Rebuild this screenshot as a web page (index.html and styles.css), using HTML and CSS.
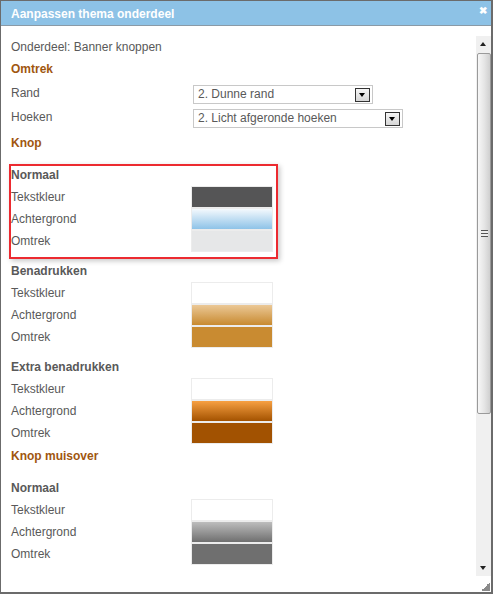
FILE: index.html
```html
<!DOCTYPE html>
<html lang="nl">
<head>
    <meta charset="UTF-8">
    <title>Aanpassen thema onderdeel</title>
    <link rel="stylesheet" href="styles.css">
</head>
<body>
    <div class="dialog">
        <div class="titlebar">
            <span class="title">Aanpassen thema onderdeel</span>
            <span class="close">&#10006;</span>
        </div>
        <div class="pane">
            <div class="content">
                <p class="intro">Onderdeel: Banner knoppen</p>

                <h2 class="section">Omtrek</h2>
                <div class="field">
                    <span class="label">Rand</span>
                    <div class="select select-short">2. Dunne rand<span class="drop"></span></div>
                </div>
                <div class="field">
                    <span class="label">Hoeken</span>
                    <div class="select select-long">2. Licht afgeronde hoeken<span class="drop"></span></div>
                </div>

                <h2 class="section section-knop">Knop</h2>
                <div class="group highlight">
                    <h3 class="group-title">Normaal</h3>
                    <div class="rows">
                        <div class="labels">
                            <span>Tekstkleur</span>
                            <span>Achtergrond</span>
                            <span>Omtrek</span>
                        </div>
                        <div class="swatches">
                            <span class="swatch" style="background:#555556"></span>
                            <span class="swatch" style="background:linear-gradient(#f4f9fd, #8ec3e8)"></span>
                            <span class="swatch" style="background:#e6e7e8"></span>
                        </div>
                    </div>
                </div>
                <div class="group">
                    <h3 class="group-title">Benadrukken</h3>
                    <div class="rows">
                        <div class="labels">
                            <span>Tekstkleur</span>
                            <span>Achtergrond</span>
                            <span>Omtrek</span>
                        </div>
                        <div class="swatches">
                            <span class="swatch" style="background:#ffffff"></span>
                            <span class="swatch" style="background:linear-gradient(#ebc896, #c88a30)"></span>
                            <span class="swatch" style="background:#c98b31"></span>
                        </div>
                    </div>
                </div>
                <div class="group">
                    <h3 class="group-title">Extra benadrukken</h3>
                    <div class="rows">
                        <div class="labels">
                            <span>Tekstkleur</span>
                            <span>Achtergrond</span>
                            <span>Omtrek</span>
                        </div>
                        <div class="swatches">
                            <span class="swatch" style="background:#ffffff"></span>
                            <span class="swatch" style="background:linear-gradient(#f7a042, #a35200)"></span>
                            <span class="swatch" style="background:#a25201"></span>
                        </div>
                    </div>
                </div>

                <h2 class="section section-hover">Knop muisover</h2>
                <div class="group group-first">
                    <h3 class="group-title">Normaal</h3>
                    <div class="rows">
                        <div class="labels">
                            <span>Tekstkleur</span>
                            <span>Achtergrond</span>
                            <span>Omtrek</span>
                        </div>
                        <div class="swatches">
                            <span class="swatch" style="background:#ffffff"></span>
                            <span class="swatch" style="background:linear-gradient(#bdbdbd, #6f6f6f)"></span>
                            <span class="swatch" style="background:#6f6f6f"></span>
                        </div>
                    </div>
                </div>
            </div>
            <div class="side">
                <div class="scrollbar">
                    <span class="sb-btn sb-up"></span>
                    <span class="sb-thumb"><span class="sb-grip"></span></span>
                    <span class="sb-track"></span>
                    <span class="sb-btn sb-down"></span>
                </div>
                <div class="resize"></div>
            </div>
        </div>
    </div>
</body>
</html>
```

FILE: styles.css
```css
/* dialoog */
body {
    margin: 0;
    font-family: "Liberation Sans", Arial, sans-serif;
    font-size: 12px;
    color: #595959;
    background: #fff;
}

.dialog {
    width: 493px;
    height: 594px;
    box-sizing: border-box;
    border: 1px solid #6b6b6b;
    border-right-width: 2px;
    border-bottom-width: 2px;
    display: flex;
    flex-direction: column;
    overflow: hidden;
}

/* titelbalk */
.titlebar {
    height: 24px;
    flex: none;
    background: #8dc2e6;
    border-bottom: 1px solid #8a9aa6;
    display: flex;
    align-items: center;
    justify-content: space-between;
    padding: 0 4px 0 10px;
    color: #fff;
}
.title {
    font-weight: bold;
    font-size: 12px;
    margin-top: 1px;
}
.close {
    font-size: 10px;
    font-weight: bold;
    margin-top: -6px;
}

/* inhoud */
.pane {
    flex: 1;
    display: flex;
    min-height: 0;
}
.content {
    flex: 1;
    padding: 10px 0 0 10px;
}
.intro {
    margin: 0;
    line-height: 22px;
}
.section {
    margin: 0;
    font-size: 12px;
    font-weight: bold;
    color: #a0560f;
    line-height: 22px;
}
.section-knop {
    margin-top: 3px;
}
.section-hover {
    margin-top: 1px;
}

.field {
    display: flex;
    align-items: center;
    height: 24px;
}
.field:first-of-type {
    margin-top: 1px;
}
.label {
    width: 182px;
    flex: none;
}
.select {
    box-sizing: border-box;
    height: 19px;
    margin-top: 3px;
    border: 1px solid #c8c8c8;
    padding: 0 0 0 4px;
    line-height: 17px;
    display: flex;
    align-items: center;
    justify-content: space-between;
}
.select-short {
    width: 180px;
}
.select-long {
    width: 210px;
}
.drop {
    width: 13px;
    height: 12px;
    margin-right: 2px;
    border: 1px solid #333;
    background: linear-gradient(#f6f6f6, #d6d6d6);
    position: relative;
}
.drop::after {
    content: "";
    position: absolute;
    left: 3px;
    top: 4px;
    border-left: 3.5px solid transparent;
    border-right: 3.5px solid transparent;
    border-top: 4px solid #000;
}

/* kleurgroepen */
.group {
    margin-top: 8px;
    width: 262px;
}
.group-first,
.section + .group {
    margin-top: 10px;
}
.group-title {
    margin: 0;
    font-size: 12px;
    font-weight: bold;
    line-height: 22px;
}
.rows {
    display: grid;
    grid-template-columns: 180px 82px;
}
.labels {
    display: flex;
    flex-direction: column;
}
.labels span {
    line-height: 22px;
}
.swatches {
    display: flex;
    flex-direction: column;
    gap: 2px;
    border: 1px solid #ececec;
    background: #ececec;
}
.swatch {
    height: 20px;
}

.highlight {
    position: relative;
}
.highlight::after {
    content: "";
    position: absolute;
    top: 0;
    left: -2px;
    right: -5px;
    bottom: -7px;
    border: 2px solid #ec2a30;
    box-shadow: 2px 2px 5px rgba(0, 0, 0, 0.22);
    pointer-events: none;
}

/* schuifbalk */
.side {
    width: 15px;
    flex: none;
    display: flex;
    flex-direction: column;
    padding-top: 10px;
}
.scrollbar {
    flex: 1;
    display: flex;
    flex-direction: column;
    background: #f0f0f0;
}
.sb-btn {
    height: 16px;
    flex: none;
    position: relative;
}
.sb-btn::after {
    content: "";
    position: absolute;
    left: 4px;
    border-left: 3.5px solid transparent;
    border-right: 3.5px solid transparent;
}
.sb-up::after {
    top: 6px;
    border-bottom: 4px solid #222;
}
.sb-down::after {
    top: 6px;
    border-top: 4px solid #222;
}
.sb-thumb {
    height: 359px;
    flex: none;
    margin: 1px 0 0 1px;
    border: 1px solid #9a9a9a;
    border-radius: 2px;
    background: linear-gradient(90deg, #f7f7f7, #e4e4e4 55%, #cfcfcf);
    display: flex;
    align-items: center;
    justify-content: center;
}
.sb-grip {
    width: 7px;
    height: 7px;
    background: repeating-linear-gradient(#555 0 1px, #eee 1px 3px);
}
.sb-track {
    flex: 1;
}
.resize {
    height: 16px;
    flex: none;
    background: linear-gradient(135deg, transparent 55%, #8a8a8a 55%) no-repeat right 1px bottom 1px / 10px 10px;
}
```
